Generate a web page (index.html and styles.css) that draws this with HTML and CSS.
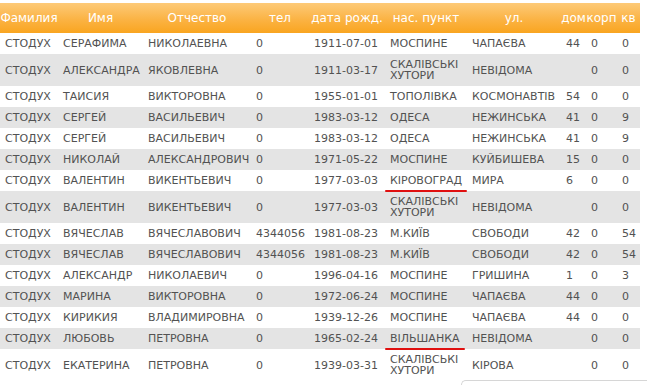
FILE: index.html
```html
<!DOCTYPE html>
<html>
<head>
<meta charset="utf-8">
<link rel="stylesheet" href="styles.css">
</head>
<body>
<table class="grid">
<colgroup>
<col class="c1"><col class="c2"><col class="c3"><col class="c4"><col class="c5"><col class="c6"><col class="c7"><col class="c8"><col class="c9"><col class="c10">
</colgroup>
<thead>
<tr><th>Фамилия</th><th>Имя</th><th>Отчество</th><th>тел</th><th>дата рожд.</th><th>нас. пункт</th><th>ул.</th><th>дом</th><th>корп</th><th>кв</th></tr>
</thead>
<tbody>
<tr><td>СТОДУХ</td><td>СЕРАФИМА</td><td>НИКОЛАЕВНА</td><td>0</td><td>1911-07-01</td><td>МОСПИНЕ</td><td>ЧАПАЄВА</td><td>44</td><td>0</td><td>0</td></tr>
<tr><td>СТОДУХ</td><td>АЛЕКСАНДРА</td><td>ЯКОВЛЕВНА</td><td>0</td><td>1911-03-17</td><td>СКАЛІВСЬКІ ХУТОРИ</td><td>НЕВІДОМА</td><td></td><td>0</td><td>0</td></tr>
<tr><td>СТОДУХ</td><td>ТАИСИЯ</td><td>ВИКТОРОВНА</td><td>0</td><td>1955-01-01</td><td>ТОПОЛІВКА</td><td>КОСМОНАВТІВ</td><td>54</td><td>0</td><td>0</td></tr>
<tr><td>СТОДУХ</td><td>СЕРГЕЙ</td><td>ВАСИЛЬЕВИЧ</td><td>0</td><td>1983-03-12</td><td>ОДЕСА</td><td>НЕЖИНСЬКА</td><td>41</td><td>0</td><td>9</td></tr>
<tr><td>СТОДУХ</td><td>СЕРГЕЙ</td><td>ВАСИЛЬЕВИЧ</td><td>0</td><td>1983-03-12</td><td>ОДЕСА</td><td>НЕЖИНСЬКА</td><td>41</td><td>0</td><td>9</td></tr>
<tr><td>СТОДУХ</td><td>НИКОЛАЙ</td><td>АЛЕКСАНДРОВИЧ</td><td>0</td><td>1971-05-22</td><td>МОСПИНЕ</td><td>КУЙБИШЕВА</td><td>15</td><td>0</td><td>0</td></tr>
<tr><td>СТОДУХ</td><td>ВАЛЕНТИН</td><td>ВИКЕНТЬЕВИЧ</td><td>0</td><td>1977-03-03</td><td><span class="mark">КІРОВОГРАД</span></td><td>МИРА</td><td>6</td><td>0</td><td>0</td></tr>
<tr><td>СТОДУХ</td><td>ВАЛЕНТИН</td><td>ВИКЕНТЬЕВИЧ</td><td>0</td><td>1977-03-03</td><td>СКАЛІВСЬКІ ХУТОРИ</td><td>НЕВІДОМА</td><td></td><td>0</td><td>0</td></tr>
<tr><td>СТОДУХ</td><td>ВЯЧЕСЛАВ</td><td>ВЯЧЕСЛАВОВИЧ</td><td>4344056</td><td>1981-08-23</td><td>М.КИЇВ</td><td>СВОБОДИ</td><td>42</td><td>0</td><td>54</td></tr>
<tr><td>СТОДУХ</td><td>ВЯЧЕСЛАВ</td><td>ВЯЧЕСЛАВОВИЧ</td><td>4344056</td><td>1981-08-23</td><td>М.КИЇВ</td><td>СВОБОДИ</td><td>42</td><td>0</td><td>54</td></tr>
<tr><td>СТОДУХ</td><td>АЛЕКСАНДР</td><td>НИКОЛАЕВИЧ</td><td>0</td><td>1996-04-16</td><td>МОСПИНЕ</td><td>ГРИШИНА</td><td>1</td><td>0</td><td>3</td></tr>
<tr><td>СТОДУХ</td><td>МАРИНА</td><td>ВИКТОРОВНА</td><td>0</td><td>1972-06-24</td><td>МОСПИНЕ</td><td>ЧАПАЄВА</td><td>44</td><td>0</td><td>0</td></tr>
<tr><td>СТОДУХ</td><td>КИРИКИЯ</td><td>ВЛАДИМИРОВНА</td><td>0</td><td>1939-12-26</td><td>МОСПИНЕ</td><td>ЧАПАЄВА</td><td>44</td><td>0</td><td>0</td></tr>
<tr><td>СТОДУХ</td><td>ЛЮБОВЬ</td><td>ПЕТРОВНА</td><td>0</td><td>1965-02-24</td><td><span class="mark">ВІЛЬШАНКА</span></td><td>НЕВІДОМА</td><td></td><td>0</td><td>0</td></tr>
<tr><td>СТОДУХ</td><td>ЕКАТЕРИНА</td><td>ПЕТРОВНА</td><td>0</td><td>1939-03-31</td><td>СКАЛІВСЬКІ ХУТОРИ</td><td>КІРОВА</td><td></td><td>0</td><td>0</td></tr>
</tbody>
</table>
<div class="panel"></div>
</body>
</html>
```
FILE: styles.css
```css
html, body {
  margin: 0;
  padding: 0;
  background: #fff;
}
body {
  padding-top: 3px;
  font-family: "DejaVu Sans", Verdana, sans-serif;
  overflow: hidden;
  height: 383px;
}
.grid {
  border-collapse: collapse;
  border-spacing: 0;
  table-layout: fixed;
  width: 640px;
}
.c1 { width: 58px; }
.c2 { width: 85px; }
.c3 { width: 108px; }
.c4 { width: 58px; }
.c5 { width: 76px; }
.c6 { width: 82px; }
.c7 { width: 94px; }
.c8 { width: 25px; }
.c9 { width: 31px; }
.c10 { width: 23px; }
.grid th {
  height: 30px;
  padding: 0;
  font-size: 12px;
  font-weight: normal;
  color: #fff;
  text-align: center;
  white-space: nowrap;
  background: linear-gradient(to bottom, #fdca78 0%, #fbb344 55%, #f9a520 100%);
}
.grid td {
  padding: 5px 5px;
  font-size: 11px;
  line-height: 11px;
  color: #525252;
  text-align: left;
  vertical-align: middle;
}
.grid tbody tr:nth-child(even) td {
  background: #e4e4e4;
}
.mark {
  position: relative;
}
.mark::after {
  content: "";
  position: absolute;
  left: -5px;
  right: -5px;
  bottom: -5px;
  height: 2.5px;
  border-radius: 2px;
  background: #e01010;
}
.panel {
  margin-left: 461px;
  margin-top: -1px;
  height: 4px;
  border: 1px solid #d6d6d6;
  border-bottom: none;
  border-right: none;
  border-radius: 5px 0 0 0;
}
```
